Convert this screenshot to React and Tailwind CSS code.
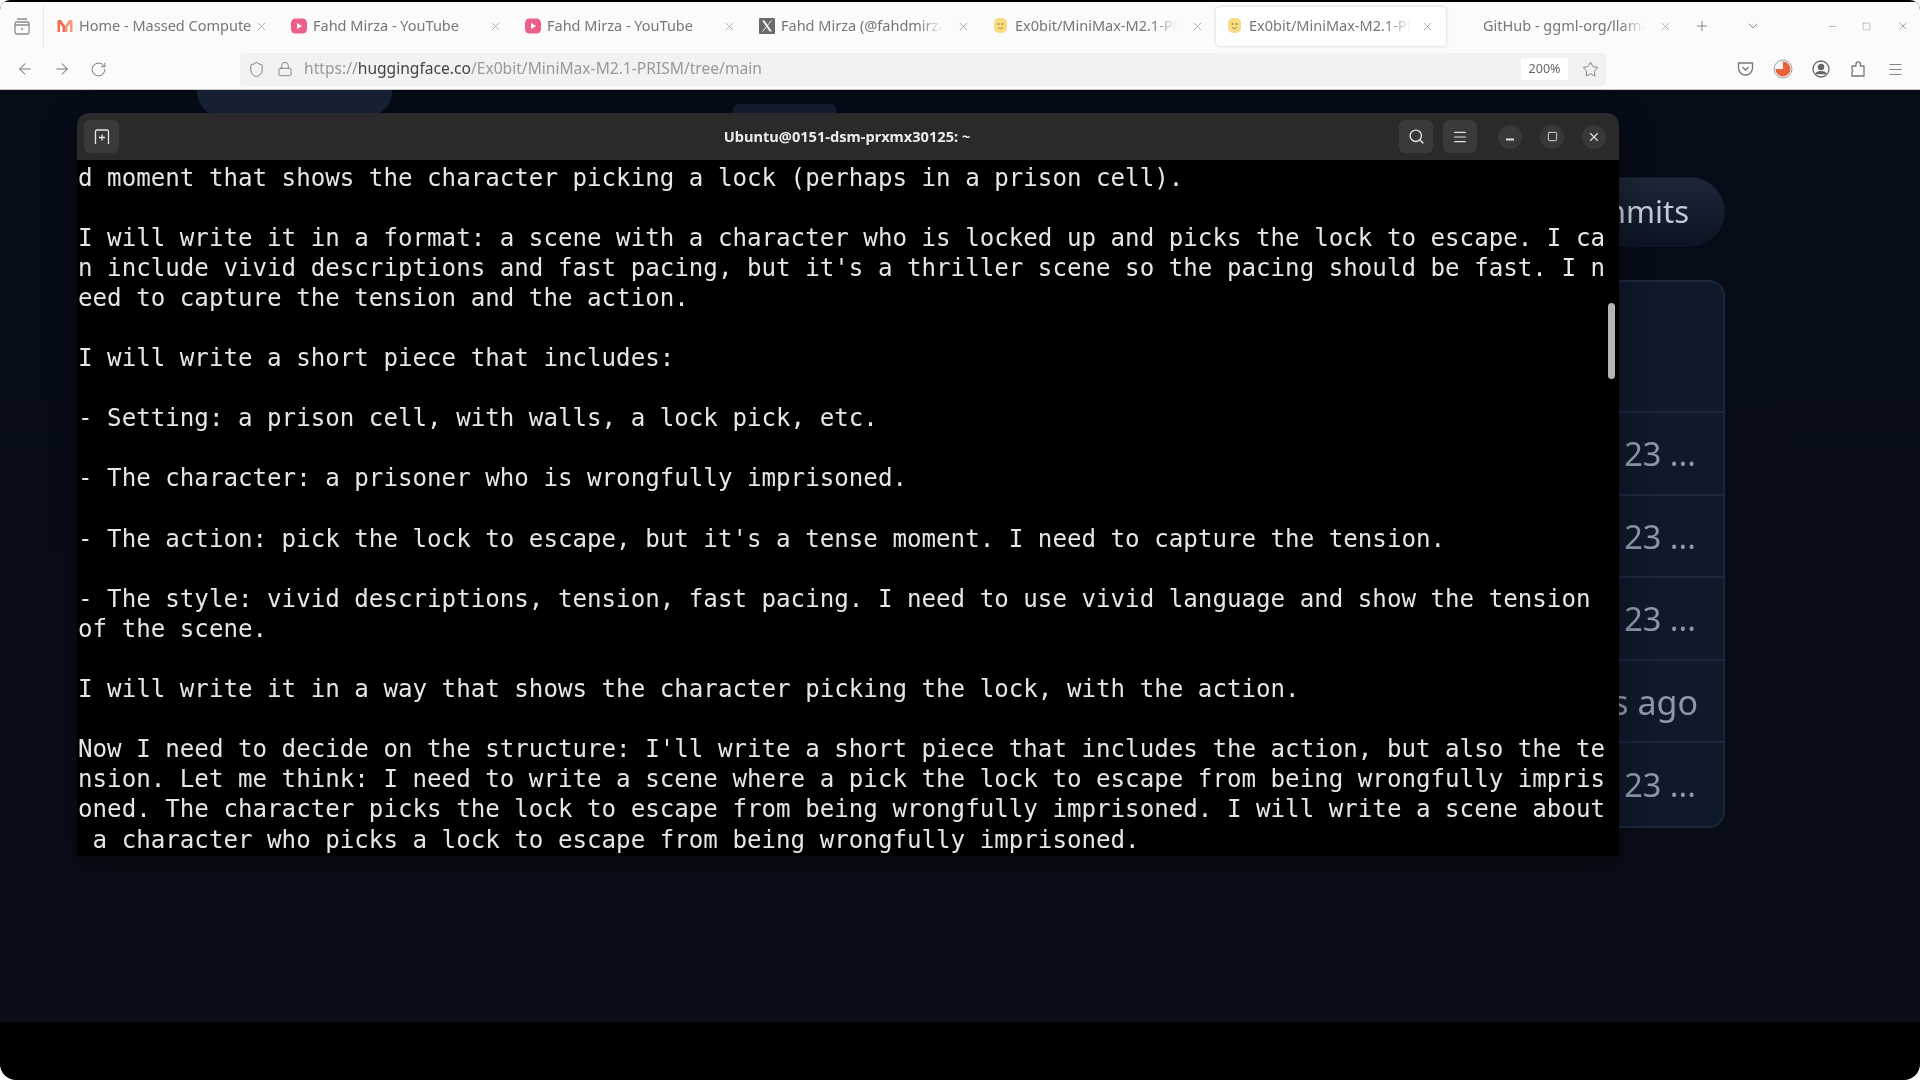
import React from "react";
import { ArrowLeft, ArrowRight, RotateCw, Shield, Lock, Star, X, Plus, ChevronDown, Minus, Square, Search, Menu } from "lucide-react";

const lines = [
  "d moment that shows the character picking a lock (perhaps in a prison cell).",
  "",
  "I will write it in a format: a scene with a character who is locked up and picks the lock to escape. I ca",
  "n include vivid descriptions and fast pacing, but it's a thriller scene so the pacing should be fast. I n",
  "eed to capture the tension and the action.",
  "",
  "I will write a short piece that includes:",
  "",
  "- Setting: a prison cell, with walls, a lock pick, etc.",
  "",
  "- The character: a prisoner who is wrongfully imprisoned.",
  "",
  "- The action: pick the lock to escape, but it's a tense moment. I need to capture the tension.",
  "",
  "- The style: vivid descriptions, tension, fast pacing. I need to use vivid language and show the tension",
  "of the scene.",
  "",
  "I will write it in a way that shows the character picking the lock, with the action.",
  "",
  "Now I need to decide on the structure: I'll write a short piece that includes the action, but also the te",
  "nsion. Let me think: I need to write a scene where a pick the lock to escape from being wrongfully impris",
  "oned. The character picks the lock to escape from being wrongfully imprisoned. I will write a scene about",
  " a character who picks a lock to escape from being wrongfully imprisoned.",
];

function MassedIcon() {
  return (
    <svg width="16" height="16" viewBox="0 0 16 16">
      <path d="M0.5 2 L4 2 L8 8 L8 14 L5.5 14 L5.5 9 L3 6 L3 14 L0.5 14 Z" fill="#ef6f50" />
      <path d="M15.5 2 L12 2 L8 8 L8 14 L10.5 14 L10.5 9 L13 6 L13 14 L15.5 14 Z" fill="#f59a7e" />
    </svg>
  );
}
function YouTubeIcon() {
  return (
    <svg width="16" height="16" viewBox="0 0 16 16">
      <rect x="0" y="0.5" width="16" height="15" rx="4.5" fill="#ec5f8a" />
      <path d="M6 5 L11 8 L6 11 Z" fill="#fff" />
    </svg>
  );
}
function XIcon() {
  return (
    <svg width="16" height="16" viewBox="0 0 16 16">
      <rect width="16" height="16" rx="1" fill="#6a6a6a" />
      <path d="M3 2.5 H5.5 L13 13.5 H10.5 Z" fill="#eee" />
      <path d="M12.5 2.5 L3.5 13.5" stroke="#eee" strokeWidth="1" />
    </svg>
  );
}
function HFIcon() {
  return (
    <svg width="16" height="18" viewBox="0 0 16 18">
      <rect x="1" y="1" width="13" height="15" rx="5" fill="#f7dc83" />
      <circle cx="5.5" cy="7" r="1" fill="#a98a3a" />
      <circle cx="9.5" cy="7" r="1" fill="#a98a3a" />
      <path d="M5 10.5 Q7.5 13 10 10.5" stroke="#a98a3a" strokeWidth="1" fill="none" />
    </svg>
  );
}

const tabs = [
  { icon: <MassedIcon />, title: "Home - Massed Compute" },
  { icon: <YouTubeIcon />, title: "Fahd Mirza - YouTube" },
  { icon: <YouTubeIcon />, title: "Fahd Mirza - YouTube" },
  { icon: <XIcon />, title: "Fahd Mirza (@fahdmirza)", fade: true },
  { icon: <HFIcon />, title: "Ex0bit/MiniMax-M2.1-PRISM", fade: true },
  { icon: <HFIcon />, title: "Ex0bit/MiniMax-M2.1-PRISM", fade: true, active: true },
  { icon: null, title: "GitHub - ggml-org/llama.cpp", fade: true },
];

function Tab({ icon, title, fade, active }) {
  return (
    <div
      className={
        active
          ? "w-[230px] mr-[4px] h-[39px] flex items-center pl-[11px] pr-[12px] rounded-[4px] bg-white shadow-[0_0_3px_rgba(0,0,0,0.2)]"
          : "w-[234px] h-[39px] flex items-center pl-[11px] pr-[12px]"
      }
    >
      <div className="w-[16px] h-[18px] flex items-center justify-center shrink-0">{icon}</div>
      <div
        className={
          fade
            ? "ml-[6px] w-[162px] overflow-hidden whitespace-nowrap text-[14.5px] text-[#777] [mask-image:linear-gradient(to_right,black_85%,transparent)]"
            : "ml-[6px] w-[172px] overflow-hidden whitespace-nowrap text-[14.5px] text-[#777]"
        }
      >
        {title}
      </div>
      <div className="flex-1" />
      <X size={13} strokeWidth={1.2} color="#888" className="shrink-0" />
    </div>
  );
}

function NavCell({ children }) {
  return <div className="w-[37px] h-[38px] flex items-center justify-center shrink-0">{children}</div>;
}
function ToolCell({ children }) {
  return <div className="w-[37.5px] h-[38px] flex items-center justify-center shrink-0">{children}</div>;
}

function Row({ children, last, wide }) {
  const size = wide ? "text-[34px] pr-[25px]" : "text-[32.5px] pr-[27px]";
  return (
    <div
      className={
        last
          ? "h-[83px] flex items-center justify-end pt-[2px] text-[#8b98a9] whitespace-nowrap " + size
          : "h-[83px] flex items-center justify-end pt-[2px] text-[#8b98a9] whitespace-nowrap border-b-2 border-[#1b2638] " + size
      }
    >
      {children}
    </div>
  );
}

export default function App() {
  return (
    <div className="w-[1920px] h-[1080px] bg-white overflow-hidden font-['Noto_Sans',sans-serif] blur-[0.5px]">
      <div className="w-full h-full bg-black rounded-t-[10px] rounded-b-[16px] overflow-hidden flex flex-col pt-[2px]">
        {/* Browser chrome */}
        <div className="h-[88px] bg-[#fbfbfb] shrink-0 flex flex-col border-b border-[#c8c8c8]">
          <div className="h-[48px] flex items-center">
            <div className="w-[44px] h-[44px] flex items-center justify-center border-r border-[#e8e8e8] shrink-0">
              <svg width="18" height="20" viewBox="0 0 18 20" fill="none" stroke="#8a8a8a" strokeWidth="1.3">
                <rect x="2" y="6" width="14" height="12" rx="1.5" />
                <path d="M4 3 H14" />
                <path d="M2 9 H16" />
                <path d="M8 13 H10" />
              </svg>
            </div>
            <div className="ml-[2px] flex items-center shrink-0">
              {tabs.map((t, i) => (
                <Tab key={i} {...t} />
              ))}
            </div>
            <div className="w-[36px] flex justify-center shrink-0">
              <Plus size={16} strokeWidth={1.3} color="#777" />
            </div>
            <div className="ml-[13px] w-[40px] flex justify-center shrink-0">
              <ChevronDown size={16} strokeWidth={1.3} color="#777" />
            </div>
            <div className="ml-[47px] w-[24px] flex justify-center shrink-0">
              <Minus size={11} strokeWidth={1.3} color="#888" />
            </div>
            <div className="ml-[10px] w-[24px] flex justify-center shrink-0">
              <Square size={9} strokeWidth={1.3} color="#888" />
            </div>
            <div className="ml-[13px] w-[24px] flex justify-center shrink-0">
              <X size={12} strokeWidth={1.3} color="#777" />
            </div>
          </div>
          <div className="flex-1 flex items-center pl-[6px] -mt-[1px]">
            <NavCell><ArrowLeft size={18} strokeWidth={1.4} color="#777" /></NavCell>
            <NavCell><ArrowRight size={18} strokeWidth={1.4} color="#777" /></NavCell>
            <NavCell><RotateCw size={17} strokeWidth={1.4} color="#777" /></NavCell>
            <div className="ml-[123px] w-[1366px] h-[33px] bg-[#f2f2f3] rounded-[4px] flex items-center pl-[7px] pr-[4px] shrink-0">
              <div className="w-[18px] flex justify-center"><Shield size={17} strokeWidth={1.3} color="#777" /></div>
              <div className="ml-[11px] w-[18px] flex justify-center"><Lock size={16} strokeWidth={1.3} color="#777" /></div>
              <div className="ml-[10px] text-[15.6px] whitespace-nowrap text-[#999]">
                https://<span className="text-[#444]">huggingface.co</span>/Ex0bit/MiniMax-M2.1-PRISM/tree/main
              </div>
              <div className="flex-1" />
              <div className="w-[47px] h-[22px] bg-white rounded-[3px] flex items-center justify-center text-[12.5px] text-[#666]">200%</div>
              <div className="ml-[10px] w-[24px] flex justify-center"><Star size={17} strokeWidth={1.3} color="#777" /></div>
            </div>
            <div className="ml-[121px] flex">
              <ToolCell>
                <svg width="17" height="16" viewBox="0 0 17 16" fill="none" stroke="#777" strokeWidth="1.3">
                  <path d="M1.5 2 H15.5 V7 A7 7 0 0 1 1.5 7 Z" strokeLinejoin="round" />
                  <path d="M5.5 6 L8.5 9 L11.5 6" />
                </svg>
              </ToolCell>
              <ToolCell>
                <svg width="20" height="20" viewBox="0 0 20 20">
                  <circle cx="10" cy="10" r="9" fill="#f5f5f5" stroke="#a0a0a0" strokeWidth="1" />
                  <path d="M10 10 L10 2.5 A7.5 7.5 0 1 1 2.5 10 Z" fill="#e8623a" />
                </svg>
              </ToolCell>
              <ToolCell>
                <svg width="18" height="18" viewBox="0 0 18 18" fill="none" stroke="#666" strokeWidth="1.3">
                  <circle cx="9" cy="9" r="8" />
                  <circle cx="9" cy="7" r="2.6" fill="#666" />
                  <path d="M4.2 13.5 C5.5 11 12.5 11 13.8 13.5 Z" fill="#666" />
                </svg>
              </ToolCell>
              <ToolCell>
                <svg width="18" height="20" viewBox="0 0 18 20" fill="none" stroke="#777" strokeWidth="1.3" strokeLinejoin="round">
                  <path d="M3 7 H7 V5 a2.2 2.2 0 0 1 4.4 0 V7 H15 V17 H3 V13.5 a2 2 0 0 0 0 -3 Z" />
                </svg>
              </ToolCell>
              <ToolCell><Menu size={17} strokeWidth={1.3} color="#777" /></ToolCell>
            </div>
          </div>
        </div>

        {/* Page */}
        <div className="relative h-[932px] shrink-0 overflow-hidden bg-linear-to-b from-[#050b17] to-[#0a0d18] flex flex-col items-end pr-[195px]">
          <div className="absolute left-[197px] -top-[30px] w-[195px] h-[56px] bg-[#162234] rounded-[24px]" />
          <div className="absolute left-[733px] top-[14px] w-[103px] h-[20px] bg-[#141e30] rounded-t-[6px]" />

          <div className="mt-[87px] h-[69px] w-[700px] rounded-full bg-linear-to-b from-[#1c2738] to-[#0c1422] border border-[#141d2c] flex items-center justify-end pr-[35px] text-[31px] text-[#c4cad3] whitespace-nowrap">
            History: 23 commits
          </div>

          <div className="mt-[34px] w-[1300px] h-[548px] rounded-[16px] border-2 border-[#1b2638] bg-[#0e1929] flex flex-col overflow-hidden">
            <div className="h-[131px] border-b-2 border-[#1b2638] shrink-0" />
            <Row>23 ...</Row>
            <Row>23 ...</Row>
            <Row>23 ...</Row>
            <Row wide>3 days ago</Row>
            <Row last>23 ...</Row>
          </div>

          {/* Terminal window */}
          <div className="absolute left-[77px] top-[23px] w-[1542px] h-[743px] rounded-t-[12px] overflow-hidden bg-black shadow-[0_10px_30px_rgba(0,0,0,0.35)] flex flex-col">
            <div className="h-[47px] bg-[#2a2a2a] shrink-0 flex items-center pl-[7px] pr-[13px]">
              <div className="w-[35px] h-[33px] rounded-[6px] bg-[#3a3a3a] flex items-center justify-center">
                <svg width="16" height="16" viewBox="0 0 16 16" fill="none" stroke="#e8e8e8" strokeWidth="1.3">
                  <path d="M1.5 15 V2.5 A1.5 1.5 0 0 1 3 1 H13 A1.5 1.5 0 0 1 14.5 2.5 V15" />
                  <path d="M8 5.5 V11.5 M5 8.5 H11" />
                </svg>
              </div>
              <div className="flex-1 text-center text-[14.6px] font-bold text-[#ececec] whitespace-nowrap pl-[176px]">
                Ubuntu@0151-dsm-prxmx30125: ~
              </div>
              <div className="w-[34px] h-[33px] rounded-[6px] bg-[#3a3a3a] flex items-center justify-center">
                <Search size={17} strokeWidth={2} color="#e0e0e0" />
              </div>
              <div className="ml-[10px] w-[34px] h-[33px] rounded-[6px] bg-[#3a3a3a] flex items-center justify-center">
                <Menu size={16} strokeWidth={1.8} color="#e0e0e0" />
              </div>
              <div className="ml-[21px] w-[24px] h-[24px] rounded-full bg-[#383838] flex items-center justify-center">
                <svg width="12" height="12" viewBox="0 0 12 12" fill="none" stroke="#e0e0e0" strokeWidth="1.8">
                  <path d="M2 8.5 H10" />
                </svg>
              </div>
              <div className="ml-[18px] w-[24px] h-[24px] rounded-full bg-[#383838] flex items-center justify-center">
                <Square size={11} strokeWidth={2} color="#e0e0e0" />
              </div>
              <div className="ml-[18px] w-[24px] h-[24px] rounded-full bg-[#383838] flex items-center justify-center">
                <X size={14} strokeWidth={2} color="#e0e0e0" />
              </div>
            </div>
            <div className="relative flex-1 pl-[1px] pt-[2.5px] font-['DejaVu_Sans_Mono',monospace] text-[24.16px] leading-[30.1px] text-[#e6e6e6]">
              {lines.map((l, i) => (
                <div key={i} className="h-[30.1px] whitespace-pre">{l}</div>
              ))}
              <div className="absolute left-[1531px] top-[143px] w-[7px] h-[76px] rounded-full bg-[#b4b4b4]" />
            </div>
          </div>
        </div>
      </div>
    </div>
  );
}
